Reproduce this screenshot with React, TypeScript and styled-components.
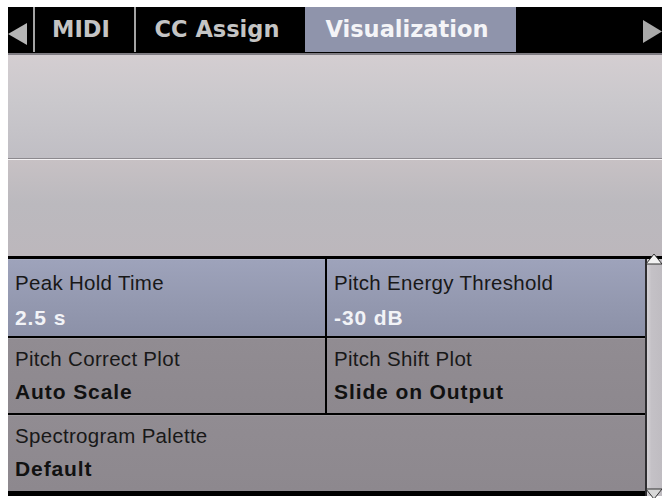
import React from 'react'
import styled, { createGlobalStyle } from 'styled-components'

const GlobalStyle = createGlobalStyle`
    html, body {
        margin: 0;
        padding: 0;
        background: #fff;
        overflow: hidden;
    }
    body {
        padding: 7px 0 0 8px;
    }
`

const Window = styled.div`
    width: 654px;
    height: 491px;
    display: flex;
    flex-direction: column;
    overflow: visible;
`

const TabBar = styled.div`
    display: flex;
    height: 46px;
    background: #000;
    align-items: stretch;
`

const Arrow = styled.div<{ $side: 'left' | 'right' }>`
    width: ${(p) => (p.$side === 'left' ? 25 : 19)}px;
    display: flex;
    align-items: center;
    justify-content: ${(p) => (p.$side === 'left' ? 'flex-start' : 'flex-end')};
    padding-top: ${(p) => (p.$side === 'left' ? 8 : 3)}px;
    box-sizing: border-box;
`

const Divider = styled.div`
    width: 2px;
    background: #a4a4a4;
    margin-bottom: 1px;
`

const Tab = styled.div<{ $width: number; $active?: boolean }>`
    width: ${(p) => p.$width}px;
    display: flex;
    align-items: center;
    justify-content: center;
    padding: 0 7px 2px 0;
    box-sizing: border-box;
    font-family: 'DejaVu Sans', sans-serif;
    font-weight: bold;
    font-size: 22.5px;
    color: ${(p) => (p.$active ? '#f4f4f7' : '#c4c4c4')};
    background: ${(p) => (p.$active ? '#8f94ab' : 'transparent')};
    margin-bottom: ${(p) => (p.$active ? 1 : 0)}px;
    white-space: nowrap;
`

const Spacer = styled.div`
    flex: 1;
`

const Rule = styled.div`
    height: 2px;
    background: #7f7c82;
`

const Pane = styled.div<{ $h: number; $top: string; $mid: string; $bottom: string }>`
    height: ${(p) => p.$h}px;
    background: linear-gradient(${(p) => p.$top}, ${(p) => p.$mid} 45%, ${(p) => p.$bottom});
`

const PaneSplit = styled.div`
    height: 1px;
    background: #8c898e;
    border-bottom: 1px solid #f4f2f4;
`

const Settings = styled.div`
    display: flex;
    background: #000;
    border-top: 3px solid #000;
    padding-bottom: 5px;
`

const Grid = styled.div`
    flex: 1;
    display: grid;
    grid-template-columns: 317px 1fr;
    grid-template-rows: 77px 75px 76px;
    gap: 2px;
`

const Cell = styled.div<{ $tone: 'blue' | 'grey'; $wide?: boolean }>`
    grid-column: ${(p) => (p.$wide ? '1 / -1' : 'auto')};
    padding: ${(p) => (p.$tone === 'blue' ? 12 : 9)}px 8px 0 7px;
    background: ${(p) =>
        p.$tone === 'blue' ? 'linear-gradient(#9ea3bb, #9398af 60%, #8c91a8)' : 'linear-gradient(#918c92, #8d888e)'};
    box-shadow: inset 0 1px 0 rgba(255, 255, 255, 0.12);
`

const Label = styled.div`
    font-family: 'Liberation Sans', Arial, sans-serif;
    font-size: 20.5px;
    line-height: 24px;
    letter-spacing: 0.3px;
    color: #181818;
    white-space: nowrap;
`

const Value = styled.div<{ $tone: 'blue' | 'grey' }>`
    margin-top: ${(p) => (p.$tone === 'blue' ? 10 : 8)}px;
    font-family: 'Liberation Sans', Arial, sans-serif;
    font-weight: bold;
    font-size: 21px;
    line-height: 26px;
    letter-spacing: 0.9px;
    color: ${(p) => (p.$tone === 'blue' ? '#f2f3f7' : '#111')};
    white-space: nowrap;
`

const Scrollbar = styled.div`
    width: 15px;
    border-left: 2px solid #2e2d30;
    background: linear-gradient(90deg, #d4d1d5, #c4c1c6 30%, #bfbcc1);
    position: relative;
    margin-bottom: -5px;
`

const ScrollArrow = styled.svg<{ $dir: 'up' | 'down' }>`
    position: absolute;
    left: -3px;
    ${(p) => (p.$dir === 'up' ? 'top: -6px;' : 'bottom: -4px;')}
`

const tabs = [
    { name: 'MIDI', width: 99 },
    { name: 'CC Assign', width: 169 },
    { name: 'Visualization', width: 211, active: true },
]

const App: React.FC = () => {
    return (
        <>
            <GlobalStyle />
            <Window>
                <TabBar>
                    <Arrow $side="left">
                        <svg width="19" height="22" viewBox="0 0 19 22">
                            <polygon points="19,0 19,22 0,11" fill="#b6b6b6" />
                        </svg>
                    </Arrow>
                    <Divider />
                    {tabs.map((t, i) => (
                        <React.Fragment key={t.name}>
                            <Tab $width={t.width} $active={t.active}>
                                {t.name}
                            </Tab>
                            {i === 0 && <Divider />}
                        </React.Fragment>
                    ))}
                    <Spacer />
                    <Arrow $side="right">
                        <svg width="19" height="23" viewBox="0 0 19 23">
                            <polygon points="0,0 19,11.5 0,23" fill="#a9a9a9" />
                        </svg>
                    </Arrow>
                </TabBar>
                <Rule />
                <Pane $h={103} $top="#d4ced1" $mid="#cac8cc" $bottom="#c0bec4" />
                <PaneSplit />
                <Pane $h={96} $top="#c7c1c4" $mid="#bbb9be" $bottom="#bcb7bc" />
                <Settings>
                    <Grid>
                        <Cell $tone="blue">
                            <Label>Peak Hold Time</Label>
                            <Value $tone="blue">2.5 s</Value>
                        </Cell>
                        <Cell $tone="blue">
                            <Label>Pitch Energy Threshold</Label>
                            <Value $tone="blue">-30 dB</Value>
                        </Cell>
                        <Cell $tone="grey">
                            <Label>Pitch Correct Plot</Label>
                            <Value $tone="grey">Auto Scale</Value>
                        </Cell>
                        <Cell $tone="grey">
                            <Label>Pitch Shift Plot</Label>
                            <Value $tone="grey">Slide on Output</Value>
                        </Cell>
                        <Cell $tone="grey" $wide>
                            <Label>Spectrogram Palette</Label>
                            <Value $tone="grey">Default</Value>
                        </Cell>
                    </Grid>
                    <Scrollbar>
                        <ScrollArrow $dir="up" width="20" height="12" viewBox="0 0 20 12">
                            <polygon points="10,1 18,11 2,11" fill="#f2f2f2" stroke="#333" strokeWidth="1" />
                        </ScrollArrow>
                        <ScrollArrow $dir="down" width="20" height="12" viewBox="0 0 20 12">
                            <polygon points="2,1 18,1 10,11" fill="#d8d8d8" stroke="#333" strokeWidth="1" />
                        </ScrollArrow>
                    </Scrollbar>
                </Settings>
            </Window>
        </>
    )
}

export default App
